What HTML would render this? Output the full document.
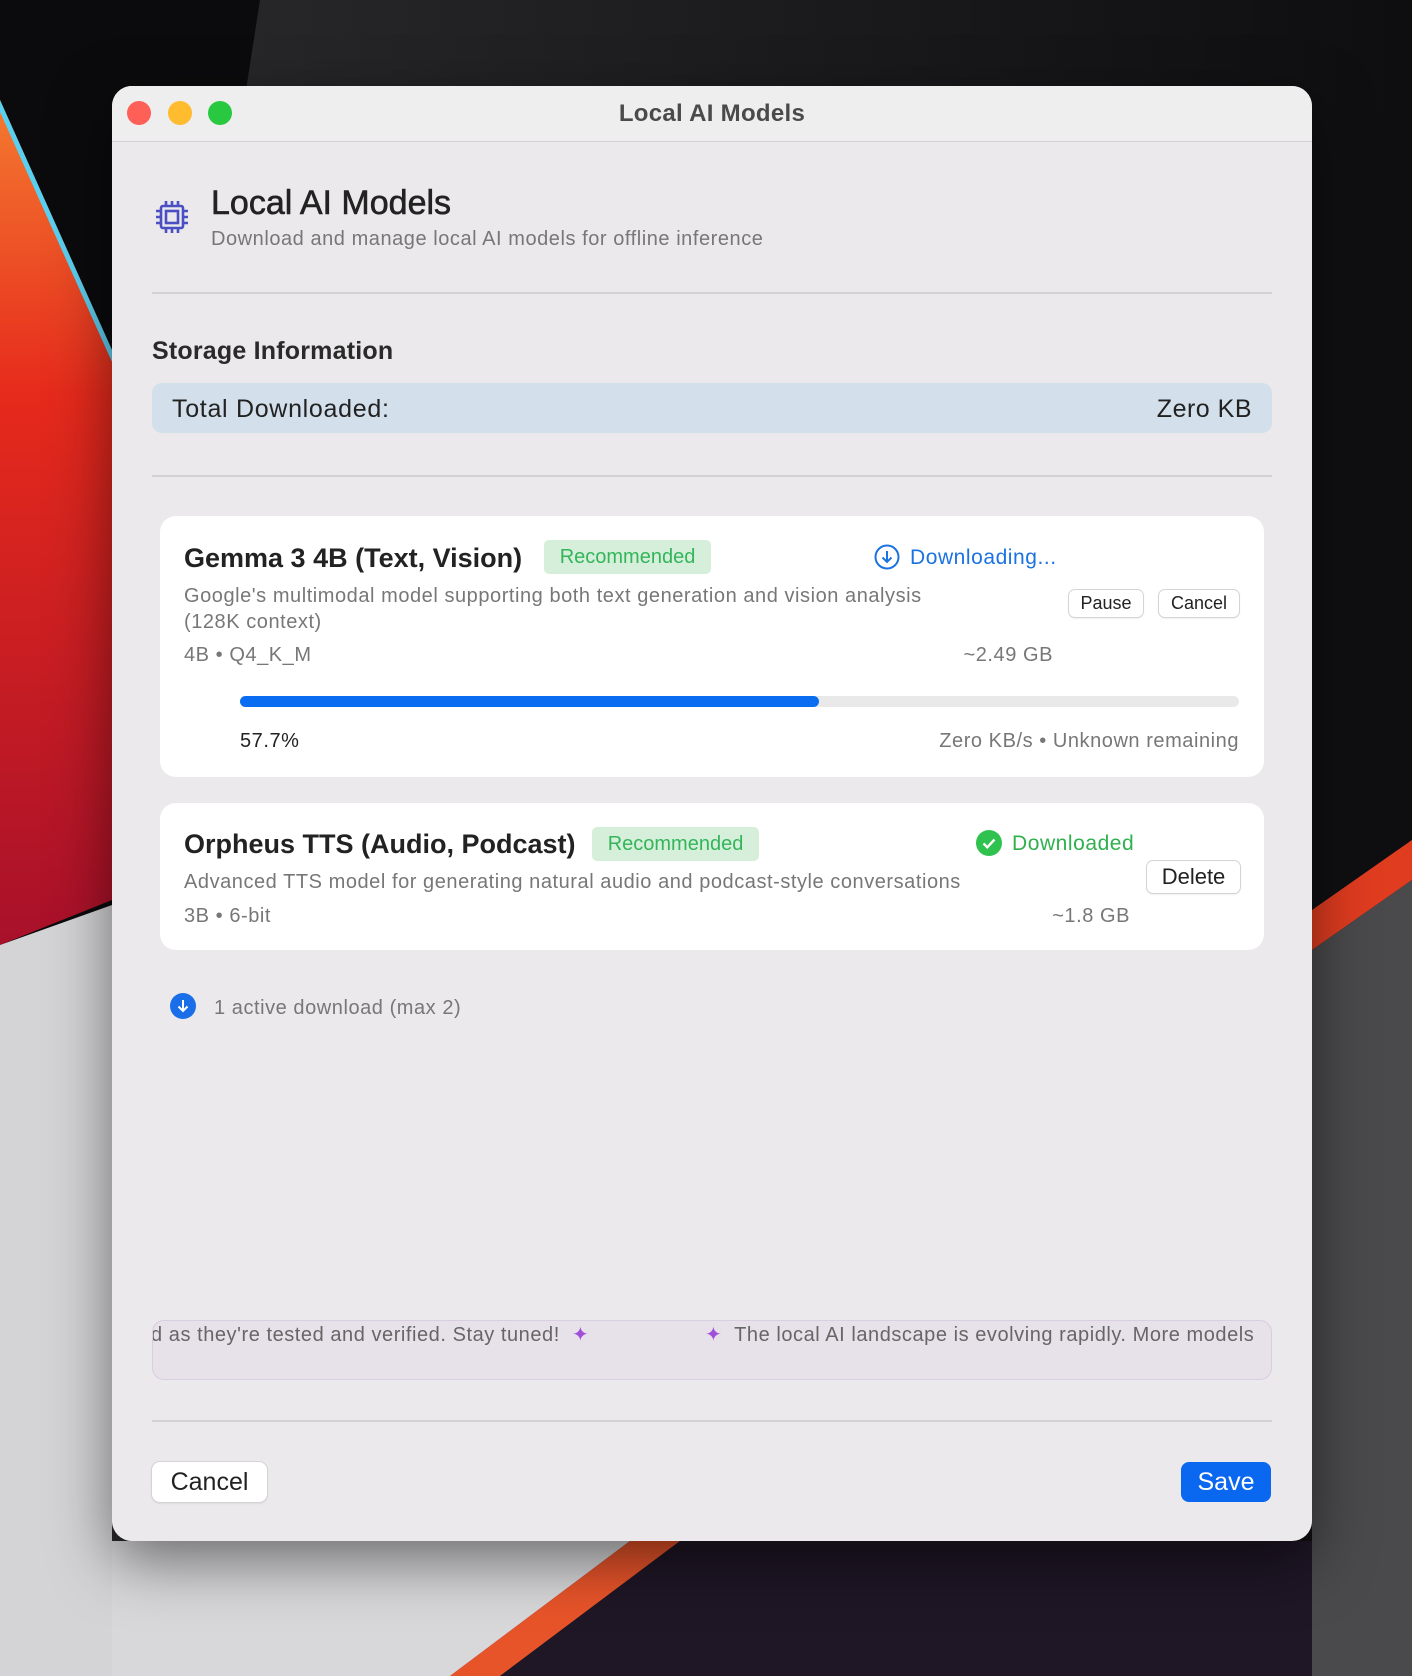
<!DOCTYPE html>
<html><head><meta charset="utf-8"><style>
*{margin:0;padding:0;box-sizing:border-box}
body{width:1412px;height:1676px;position:relative;overflow:hidden;font-family:"Liberation Sans",sans-serif;background:#0b0b0d}
.a{position:absolute;white-space:nowrap}
.g{letter-spacing:0.55px}
.win{position:absolute;left:112px;top:86px;width:1200px;height:1455px;background:#ebe9eb;border-radius:20px;overflow:hidden;box-shadow:0 20px 60px rgba(0,0,0,.5)}
.tb{position:absolute;left:0;top:0;width:100%;height:56px;background:#efeeef;border-bottom:1.5px solid #d2d0d2}
.dot{position:absolute;top:15px;width:24px;height:24px;border-radius:50%}
.card{position:absolute;background:#fff;border-radius:16px}
.btn{position:absolute;background:#fff;border-radius:6px;box-shadow:0 0 0 1px #d4d4d4,0 1px 2px rgba(0,0,0,.15);color:#222;text-align:center}
.badge{position:absolute;background:#d5efdb;color:#34b55a;border-radius:5px;font-size:20px;text-align:center}
.hr{position:absolute;left:40px;width:1120px;height:1.5px;background:#d3d1d3}
</style></head><body>
<svg class="a" style="left:0;top:0" width="1412" height="1676">
<defs><linearGradient id="tg" x1="0" y1="0" x2="1" y2="0"><stop offset="0" stop-color="#2c2c2e"/><stop offset="1" stop-color="#0e0e10"/></linearGradient>
<linearGradient id="rg" x1="0" y1="0" x2="0" y2="1"><stop offset="0" stop-color="#f47a30"/><stop offset=".35" stop-color="#e62a1c"/><stop offset="1" stop-color="#a8102a"/></linearGradient></defs>
<polygon points="260,0 1412,0 1412,1676 0,1676" fill="url(#tg)"/>
<polygon points="0,100 112,350 112,900 0,945" fill="url(#rg)"/>
<polygon points="0,100 112,350 112,362 0,112" fill="#5ad0f0"/>
<polygon points="0,945 112,905 112,1676 0,1676" fill="#d4d4d6"/>
<polygon points="112,1541 630,1541 450,1676 112,1676" fill="#d8d8da"/>
<polygon points="630,1541 680,1541 500,1676 450,1676" fill="#e8542a"/>
<polygon points="680,1541 1412,1541 1412,1676 500,1676" fill="#1f1626"/>
<polygon points="1312,910 1412,840 1412,880 1312,950" fill="#e03c20"/>
<polygon points="1312,950 1412,880 1412,1676 1312,1676" fill="#4a4a4c"/>
</svg>
<div class="win">
 <div class="tb">
  <div class="dot" style="left:15px;background:#fe5f57"></div>
  <div class="dot" style="left:56px;background:#febc2e"></div>
  <div class="dot" style="left:96px;background:#28c840"></div>
  <div class="a" style="left:0;width:1200px;text-align:center;top:14px;font-size:24px;font-weight:bold;color:#4a4a4a;letter-spacing:0.3px">Local AI Models</div>
 </div>
 <svg class="a" style="left:43px;top:114px" width="34" height="34" viewBox="0 0 34 34" fill="none" stroke="#4a4fc4" stroke-width="2.6">
  <rect x="6" y="6" width="22" height="22" rx="2"/><rect x="11" y="11" width="12" height="12"/>
  <path d="M11 1v5M17 1v5M23 1v5M11 28v5M17 28v5M23 28v5M1 11h5M1 17h5M1 23h5M28 11h5M28 17h5M28 23h5"/>
 </svg>
 <div class="a" style="left:99px;top:98px;font-size:34px;color:#222;-webkit-text-stroke:0.6px #222">Local AI Models</div>
 <div class="a g" style="left:99px;top:142px;font-size:20px;color:#777">Download and manage local AI models for offline inference</div>
 <div class="hr" style="top:206px"></div>
 <div class="a" style="left:40px;top:251px;font-size:25px;font-weight:bold;color:#2a2a2a;letter-spacing:0.2px">Storage Information</div>
 <div class="a" style="left:40px;top:297px;width:1120px;height:50px;background:#d3dfea;border-radius:10px"></div>
 <div class="a" style="left:60px;top:309px;font-size:25px;color:#222;letter-spacing:0.7px">Total Downloaded:</div>
 <div class="a" style="right:60px;top:309px;font-size:25px;color:#222;letter-spacing:0.5px">Zero KB</div>
 <div class="hr" style="top:389px"></div>

 <div class="card" style="left:48px;top:430px;width:1104px;height:261px"></div>
 <div class="a" style="left:72px;top:457px;font-size:27px;font-weight:bold;color:#222">Gemma 3 4B (Text, Vision)</div>
 <div class="badge" style="left:432px;top:454px;width:167px;height:34px;line-height:34px">Recommended</div>
 <svg class="a" style="left:762px;top:458px" width="26" height="26" viewBox="0 0 26 26" fill="none" stroke="#1a73e0" stroke-width="2"><circle cx="13" cy="13" r="11.5"/><path d="M13 7v11M8.5 13.5l4.5 4.5 4.5-4.5"/></svg>
 <div class="a g" style="left:798px;top:460px;font-size:21px;color:#1a73e0">Downloading...</div>
 <div class="a g" style="left:72px;top:497px;font-size:20px;color:#777;line-height:26px">Google's multimodal model supporting both text generation and vision analysis<br>(128K context)</div>
 <div class="btn" style="left:957px;top:504px;width:74px;height:27px;line-height:27px;font-size:18px">Pause</div>
 <div class="btn" style="left:1047px;top:504px;width:80px;height:27px;line-height:27px;font-size:18px">Cancel</div>
 <div class="a g" style="left:72px;top:558px;font-size:20px;color:#777">4B • Q4_K_M</div>
 <div class="a g" style="right:259px;top:558px;font-size:20px;color:#777">~2.49 GB</div>
 <div class="a" style="left:128px;top:610px;width:999px;height:11px;background:#e9e9ea;border-radius:6px"></div>
 <div class="a" style="left:128px;top:610px;width:579px;height:11px;background:#0a6cf0;border-radius:6px"></div>
 <div class="a g" style="left:128px;top:644px;font-size:20px;color:#222">57.7%</div>
 <div class="a g" style="right:73px;top:644px;font-size:20px;color:#777">Zero KB/s • Unknown remaining</div>

 <div class="card" style="left:48px;top:717px;width:1104px;height:147px"></div>
 <div class="a" style="left:72px;top:743px;font-size:27px;font-weight:bold;color:#222">Orpheus TTS (Audio, Podcast)</div>
 <div class="badge" style="left:480px;top:741px;width:167px;height:34px;line-height:34px">Recommended</div>
 <svg class="a" style="left:864px;top:744px" width="26" height="26" viewBox="0 0 26 26"><circle cx="13" cy="13" r="13" fill="#30c24e"/><path d="M7.5 13.5l3.8 3.8 7.2-7.8" fill="none" stroke="#fff" stroke-width="2.4"/></svg>
 <div class="a g" style="left:900px;top:746px;font-size:21px;color:#30b04e">Downloaded</div>
 <div class="a g" style="left:72px;top:785px;font-size:20px;color:#777">Advanced TTS model for generating natural audio and podcast-style conversations</div>
 <div class="btn" style="left:1035px;top:775px;width:93px;height:32px;line-height:32px;font-size:22px">Delete</div>
 <div class="a g" style="left:72px;top:819px;font-size:20px;color:#777">3B • 6-bit</div>
 <div class="a g" style="right:182px;top:819px;font-size:20px;color:#777">~1.8 GB</div>

 <svg class="a" style="left:58px;top:907px" width="26" height="26" viewBox="0 0 26 26"><circle cx="13" cy="13" r="13" fill="#1a6fe8"/><path d="M13 7v11M8.5 13.5l4.5 4.5 4.5-4.5" fill="none" stroke="#fff" stroke-width="2"/></svg>
 <div class="a g" style="left:102px;top:911px;font-size:20px;color:#777">1 active download (max 2)</div>

 <div class="a" style="left:40px;top:1234px;width:1120px;height:60px;background:#e7e1ea;border:1.5px solid #d9cde2;border-radius:12px;overflow:hidden">
  <div class="a g" style="left:-2px;top:1px;font-size:20px;color:#666">d as they're tested and verified. Stay tuned! &nbsp;<span style="color:#a050d8">✦</span></div>
  <div class="a g" style="left:552px;top:1px;font-size:20px;color:#666"><span style="color:#a050d8">✦</span>&nbsp; The local AI landscape is evolving rapidly. More models</div>
 </div>
 <div class="hr" style="top:1334px"></div>
 <div class="btn" style="left:40px;top:1376px;width:115px;height:40px;line-height:40px;font-size:25px;border-radius:8px">Cancel</div>
 <div class="a" style="left:1069px;top:1376px;width:90px;height:40px;line-height:40px;font-size:25px;background:#0a67f0;color:#fff;border-radius:8px;text-align:center">Save</div>
</div>
</body></html>
